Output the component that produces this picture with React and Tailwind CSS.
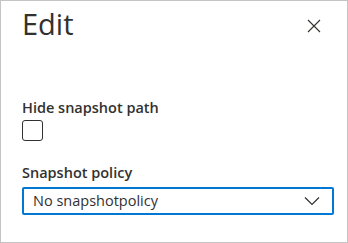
import React from 'react';

const font = { fontFamily: '"Open Sans", "Noto Sans", sans-serif' };

export default function App() {
  return (
    <div
      className="w-[348px] h-[243px] border border-[#c4c4c4] bg-white text-[#323130] flex flex-col px-[21px]"
      style={font}
    >
      <div className="flex items-start justify-between pt-[3px]">
        <h1 className="text-[29px] leading-[40px] font-normal">Edit</h1>
        <button className="mt-[14px] mr-[4px] w-[16px] h-[16px] flex items-center justify-center text-[#323130]">
          <svg width="14" height="14" viewBox="0 0 14 14" fill="none" stroke="currentColor" strokeWidth="1.1">
            <path d="M1 1L13 13M13 1L1 13" />
          </svg>
        </button>
      </div>

      <label className="mt-[54px] text-[14.5px] leading-[20px] font-semibold">Hide snapshot path</label>
      <div className="mt-[2px] w-[21px] h-[21px] border border-[#323130] rounded-[3px]" />

      <label className="mt-[22px] text-[14.5px] leading-[20px] font-semibold">Snapshot policy</label>
      <div className="mt-[4px] h-[28px] w-[312px] border-2 border-[#0078d4] rounded-[2px] flex items-center justify-between pl-[9px] pr-[12px]">
        <span className="text-[14.5px] leading-[20px]">No snapshotpolicy</span>
        <svg width="16" height="10" viewBox="0 0 16 10" fill="none" stroke="#323130" strokeWidth="1.2">
          <path d="M1 1.5L8 8.5L15 1.5" />
        </svg>
      </div>
    </div>
  );
}
